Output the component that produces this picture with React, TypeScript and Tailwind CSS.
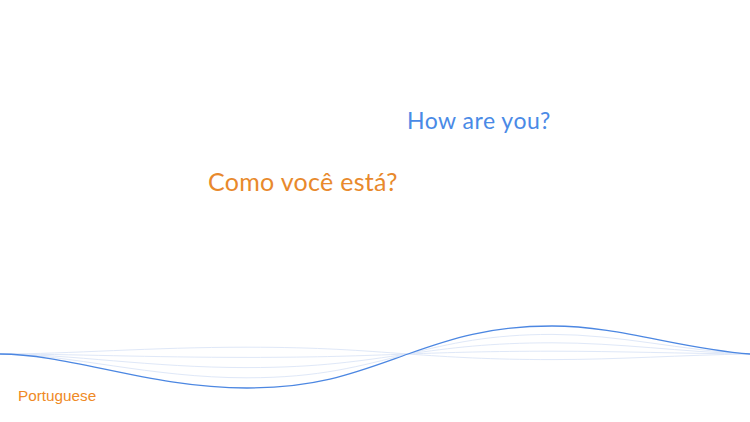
import React from "react";

// main wave, drawn as cubic segments around a flat centre line
const MID = 353;
const MAIN: [number, number][] = [
  [0, 353],
  [70, 353], [150, 387], [247, 387],
  [320, 387], [360, 370], [408, 353],
  [450, 338], [490, 325], [552, 325],
  [620, 325], [680, 348], [750, 353],
];

// the faint strands are the same curve with a smaller (or inverted) swing
const STRANDS = [0.7, 0.4, 0.1, -0.2];

function wavePath(k: number) {
  const p = MAIN.map(([x, y]) => `${x} ${(MID + (y - MID) * k).toFixed(1)}`);
  let d = `M${p[0]}`;
  for (let i = 1; i < p.length; i += 3) d += ` C${p[i]}, ${p[i + 1]}, ${p[i + 2]}`;
  return d;
}

function Wave() {
  return (
    <svg width="750" height="80" viewBox="0 311 750 80" className="block">
      {STRANDS.map((k) => (
        <path key={k} d={wavePath(k)} fill="none" stroke="#dfe8f8" strokeWidth="1" />
      ))}
      <path d={wavePath(1)} fill="none" stroke="#4c87e2" strokeWidth="1.3" />
    </svg>
  );
}

export default function App() {
  return (
    <div
      className="flex h-[422px] w-[750px] flex-col overflow-hidden bg-white"
      style={{ fontFamily: "Lato, 'Noto Sans', sans-serif" }}
    >
      <div className="pt-[105px]">
        <p className="ml-[407px] text-[23px] leading-[30px] tracking-[0.5px] text-[#4a8ae6]">How are you?</p>
        <p className="ml-[208px] mt-[30px] text-[25px] leading-[32px] tracking-[0.3px] text-[#e8892c]">Como você está?</p>
      </div>
      <div className="flex-1" />
      <Wave />
      <p className="-mt-[6px] mb-[16px] ml-[18px] font-['Liberation_Sans',Arial,sans-serif] text-[15.3px] leading-[20px] text-[#ef8a25]">
        Portuguese
      </p>
    </div>
  );
}
